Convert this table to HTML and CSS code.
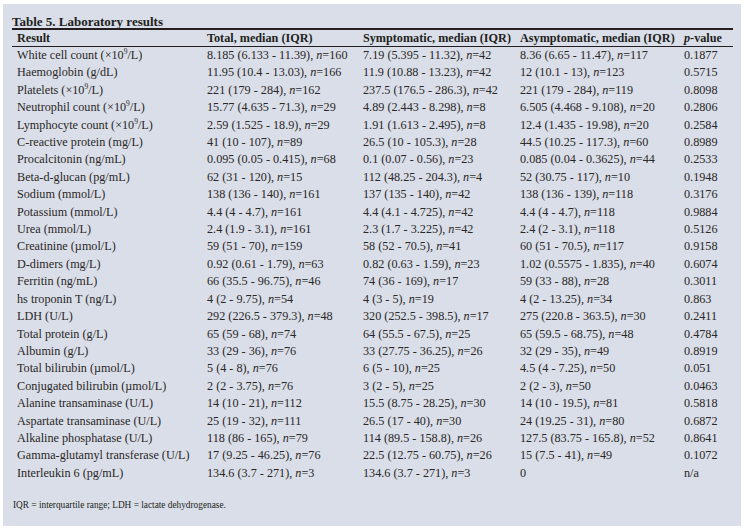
FILE: index.html
```html
<!DOCTYPE html>
<html lang="en">
<head>
<meta charset="utf-8">
<title>Table 5. Laboratory results</title>
<link rel="stylesheet" href="styles.css">
</head>
<body>
<div class="panel">
  <h1 class="title">Table 5. Laboratory results</h1>
  <table class="results">
    <colgroup>
      <col class="c1"><col class="c2"><col class="c3"><col class="c4"><col class="c5">
    </colgroup>
    <thead>
      <tr><th>Result</th><th>Total, median (IQR)</th><th>Symptomatic, median (IQR)</th><th>Asymptomatic, median (IQR)</th><th><i>p</i>-value</th></tr>
    </thead>
    <tbody>
      <tr><td>White cell count (×10<sup>9</sup>/L)</td><td>8.185 (6.133 - 11.39), <i>n</i>=160</td><td>7.19 (5.395 - 11.32), <i>n</i>=42</td><td>8.36 (6.65 - 11.47), <i>n</i>=117</td><td>0.1877</td></tr>
      <tr><td>Haemoglobin (g/dL)</td><td>11.95 (10.4 - 13.03), <i>n</i>=166</td><td>11.9 (10.88 - 13.23), <i>n</i>=42</td><td>12 (10.1 - 13), <i>n</i>=123</td><td>0.5715</td></tr>
      <tr><td>Platelets (×10<sup>9</sup>/L)</td><td>221 (179 - 284), <i>n</i>=162</td><td>237.5 (176.5 - 286.3), <i>n</i>=42</td><td>221 (179 - 284), <i>n</i>=119</td><td>0.8098</td></tr>
      <tr><td>Neutrophil count (×10<sup>9</sup>/L)</td><td>15.77 (4.635 - 71.3), <i>n</i>=29</td><td>4.89 (2.443 - 8.298), <i>n</i>=8</td><td>6.505 (4.468 - 9.108), <i>n</i>=20</td><td>0.2806</td></tr>
      <tr><td>Lymphocyte count (×10<sup>9</sup>/L)</td><td>2.59 (1.525 - 18.9), <i>n</i>=29</td><td>1.91 (1.613 - 2.495), <i>n</i>=8</td><td>12.4 (1.435 - 19.98), <i>n</i>=20</td><td>0.2584</td></tr>
      <tr><td>C-reactive protein (mg/L)</td><td>41 (10 - 107), <i>n</i>=89</td><td>26.5 (10 - 105.3), <i>n</i>=28</td><td>44.5 (10.25 - 117.3), <i>n</i>=60</td><td>0.8989</td></tr>
      <tr><td>Procalcitonin (ng/mL)</td><td>0.095 (0.05 - 0.415), <i>n</i>=68</td><td>0.1 (0.07 - 0.56), <i>n</i>=23</td><td>0.085 (0.04 - 0.3625), <i>n</i>=44</td><td>0.2533</td></tr>
      <tr><td>Beta-d-glucan (pg/mL)</td><td>62 (31 - 120), <i>n</i>=15</td><td>112 (48.25 - 204.3), <i>n</i>=4</td><td>52 (30.75 - 117), <i>n</i>=10</td><td>0.1948</td></tr>
      <tr><td>Sodium (mmol/L)</td><td>138 (136 - 140), <i>n</i>=161</td><td>137 (135 - 140), <i>n</i>=42</td><td>138 (136 - 139), <i>n</i>=118</td><td>0.3176</td></tr>
      <tr><td>Potassium (mmol/L)</td><td>4.4 (4 - 4.7), <i>n</i>=161</td><td>4.4 (4.1 - 4.725), <i>n</i>=42</td><td>4.4 (4 - 4.7), <i>n</i>=118</td><td>0.9884</td></tr>
      <tr><td>Urea (mmol/L)</td><td>2.4 (1.9 - 3.1), <i>n</i>=161</td><td>2.3 (1.7 - 3.225), <i>n</i>=42</td><td>2.4 (2 - 3.1), <i>n</i>=118</td><td>0.5126</td></tr>
      <tr><td>Creatinine (µmol/L)</td><td>59 (51 - 70), <i>n</i>=159</td><td>58 (52 - 70.5), <i>n</i>=41</td><td>60 (51 - 70.5), <i>n</i>=117</td><td>0.9158</td></tr>
      <tr><td>D-dimers (mg/L)</td><td>0.92 (0.61 - 1.79), <i>n</i>=63</td><td>0.82 (0.63 - 1.59), <i>n</i>=23</td><td>1.02 (0.5575 - 1.835), <i>n</i>=40</td><td>0.6074</td></tr>
      <tr><td>Ferritin (ng/mL)</td><td>66 (35.5 - 96.75), <i>n</i>=46</td><td>74 (36 - 169), <i>n</i>=17</td><td>59 (33 - 88), <i>n</i>=28</td><td>0.3011</td></tr>
      <tr><td>hs troponin T (ng/L)</td><td>4 (2 - 9.75), <i>n</i>=54</td><td>4 (3 - 5), <i>n</i>=19</td><td>4 (2 - 13.25), <i>n</i>=34</td><td>0.863</td></tr>
      <tr><td>LDH (U/L)</td><td>292 (226.5 - 379.3), <i>n</i>=48</td><td>320 (252.5 - 398.5), <i>n</i>=17</td><td>275 (220.8 - 363.5), <i>n</i>=30</td><td>0.2411</td></tr>
      <tr><td>Total protein (g/L)</td><td>65 (59 - 68), <i>n</i>=74</td><td>64 (55.5 - 67.5), <i>n</i>=25</td><td>65 (59.5 - 68.75), <i>n</i>=48</td><td>0.4784</td></tr>
      <tr><td>Albumin (g/L)</td><td>33 (29 - 36), <i>n</i>=76</td><td>33 (27.75 - 36.25), <i>n</i>=26</td><td>32 (29 - 35), <i>n</i>=49</td><td>0.8919</td></tr>
      <tr><td>Total bilirubin (µmol/L)</td><td>5 (4 - 8), <i>n</i>=76</td><td>6 (5 - 10), <i>n</i>=25</td><td>4.5 (4 - 7.25), <i>n</i>=50</td><td>0.051</td></tr>
      <tr><td>Conjugated bilirubin (µmol/L)</td><td>2 (2 - 3.75), <i>n</i>=76</td><td>3 (2 - 5), <i>n</i>=25</td><td>2 (2 - 3), <i>n</i>=50</td><td>0.0463</td></tr>
      <tr><td>Alanine transaminase (U/L)</td><td>14 (10 - 21), <i>n</i>=112</td><td>15.5 (8.75 - 28.25), <i>n</i>=30</td><td>14 (10 - 19.5), <i>n</i>=81</td><td>0.5818</td></tr>
      <tr><td>Aspartate transaminase (U/L)</td><td>25 (19 - 32), <i>n</i>=111</td><td>26.5 (17 - 40), <i>n</i>=30</td><td>24 (19.25 - 31), <i>n</i>=80</td><td>0.6872</td></tr>
      <tr><td>Alkaline phosphatase (U/L)</td><td>118 (86 - 165), <i>n</i>=79</td><td>114 (89.5 - 158.8), <i>n</i>=26</td><td>127.5 (83.75 - 165.8), <i>n</i>=52</td><td>0.8641</td></tr>
      <tr><td>Gamma-glutamyl transferase (U/L)</td><td>17 (9.25 - 46.25), <i>n</i>=76</td><td>22.5 (12.75 - 60.75), <i>n</i>=26</td><td>15 (7.5 - 41), <i>n</i>=49</td><td>0.1072</td></tr>
      <tr><td>Interleukin 6 (pg/mL)</td><td>134.6 (3.7 - 271), <i>n</i>=3</td><td>134.6 (3.7 - 271), <i>n</i>=3</td><td>0</td><td>n/a</td></tr>
    </tbody>
  </table>
  <p class="note">IQR = interquartile range; LDH = lactate dehydrogenase.</p>
</div>
</body>
</html>
```

FILE: styles.css
```css
html, body {
  margin: 0;
  padding: 0;
  background: #ffffff;
}

body {
  font-family: "Liberation Serif", "Times New Roman", serif;
  color: #231f20;
}

.panel {
  margin: 4px 3px 6px 3px;
  height: 522px;
  box-sizing: border-box;
  background: #d9dee8;
  padding: 12px 8px 0 9px;
}

.title {
  margin: 0;
  font-size: 13px;
  font-weight: bold;
  line-height: 12px;
  border-bottom: 2px solid #231f20;
  width: 721px;
  height: 12px;
}

.results {
  width: 721px;
  border-collapse: collapse;
  table-layout: fixed;
  font-size: 12.2px;
}

.c1 { width: 190px; }
.c2 { width: 156px; }
.c3 { width: 157px; }
.c4 { width: 164px; }
.c5 { width: 54px; }

.results th {
  text-align: left;
  font-weight: bold;
  font-size: 12.2px;
  padding: 0 0 0 5px;
  height: 16px;
  line-height: 16px;
  border-bottom: 1px solid #231f20;
  white-space: nowrap;
}

.results td {
  padding: 0 0 0 5px;
  height: 17.4px;
  line-height: 17.4px;
  white-space: nowrap;
  color: #2a2727;
}

.results sup {
  font-size: 7.5px;
  line-height: 0;
  vertical-align: 5px;
}

.note {
  margin: 18px 0 0 1px;
  font-size: 9.3px;
  color: #231f20;
}
```
